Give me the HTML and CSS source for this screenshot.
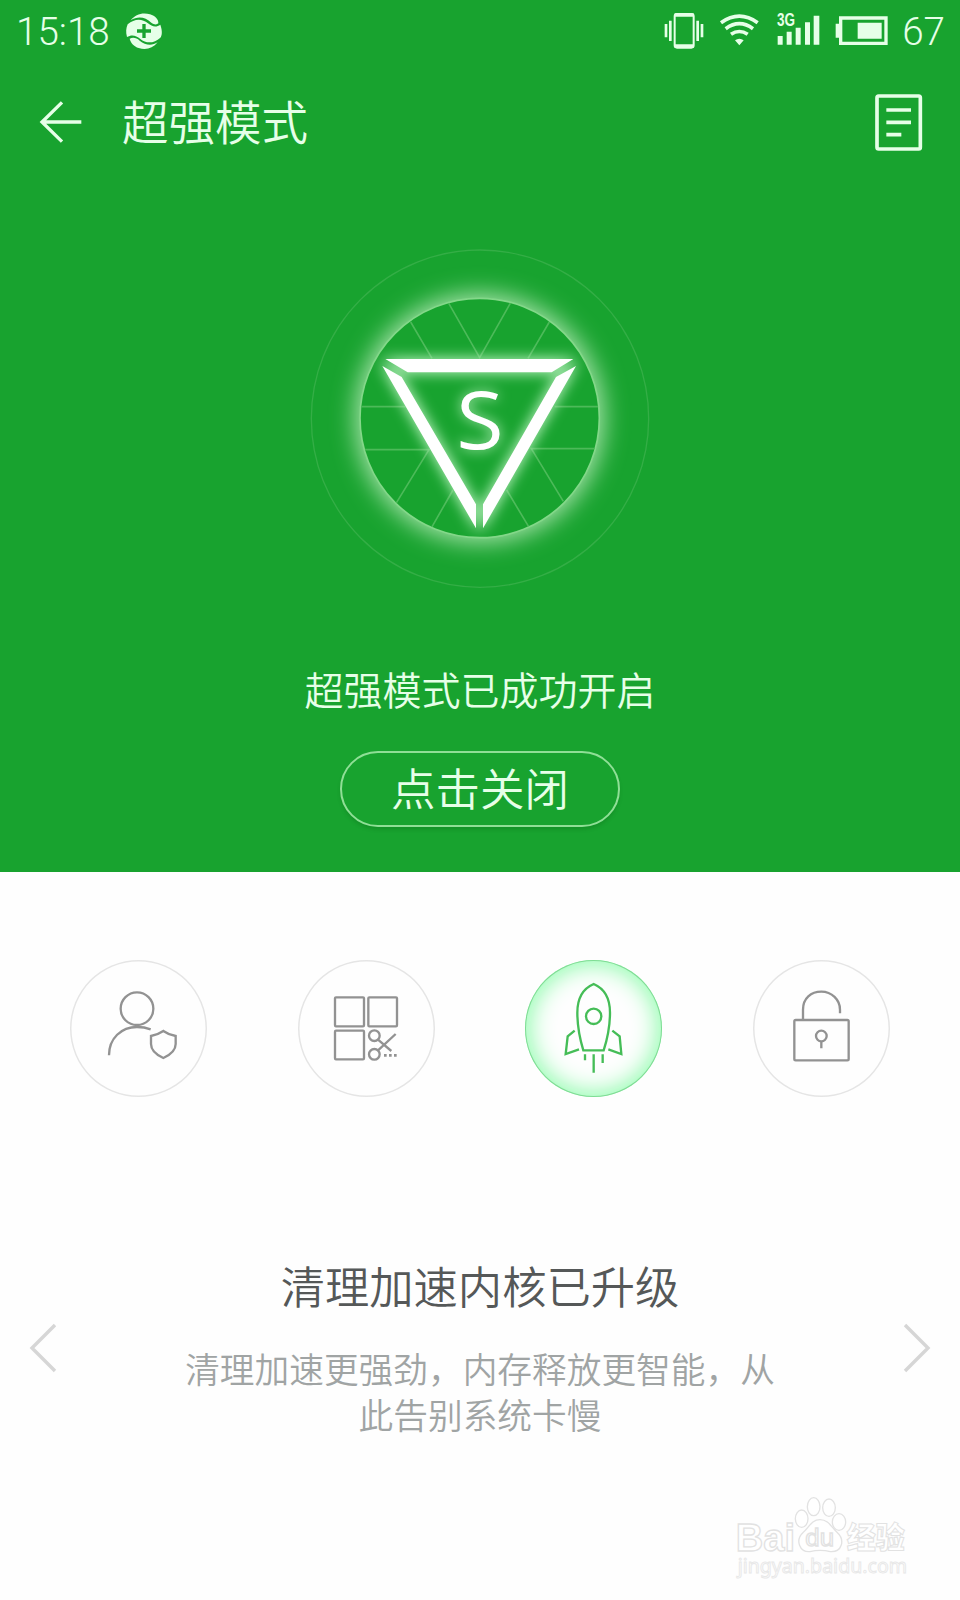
FILE: index.html
```html
<!DOCTYPE html>
<html lang="zh-CN">
<head>
<meta charset="utf-8">
<title>超强模式</title>
<link rel="stylesheet" href="styles.css">
</head>
<body>
<section class="hero">
  <div class="status-bar">
    <span class="clock">15:18</span>
    <svg class="app-badge" width="36" height="36" viewBox="0 0 108 108">
      <path fill="#e6ffe8" d="M14 22C28 4 50-3 72 4C88 9 98 20 97 31C92 36 84 35 76 29C58 12 36 8 14 22Z"/>
      <path fill="#e6ffe8" d="M5 34C26 16 48 16 66 31C78 42 92 43 103 35C110 55 108 68 103 74C84 92 60 92 43 78C30 66 16 64 3 72C-1 58 0 46 5 34Z"/>
      <path fill="#e6ffe8" d="M11 77C22 72 32 75 41 83C58 97 78 99 95 88C80 106 60 112 38 105C24 100 14 90 11 77Z"/>
      <path stroke="#18a32f" stroke-width="10" d="M33 54H75M54 33V75"/>
    </svg>
    <span class="spacer"></span>
    <svg class="system-icons" width="225" height="36" viewBox="0 0 675 108">
      <g fill="none" stroke="#e6ffe8">
        <rect x="32" y="3" width="57" height="101" rx="7" stroke-width="6"/>
        <path stroke-width="11" d="M32 6H89M32 99H89"/>
        <path stroke-width="8" d="M6 33V73M19 23V84M101 23V84M114 33V73"/>
        <path stroke-width="11" d="M171 29Q226-10 281 29M185 47Q226 17 267 47M201 64Q226 47 251 64"/>
      </g>
      <path fill="#e6ffe8" d="M213 82Q226 72 239 82L226 97ZM341 69h15v26h-15zM368 56h15v39h-15zM395 44h15v51h-15zM423 28h15v67h-15zM449 8h17v87h-17z"/>
      <text class="network" x="339" y="40" textLength="54" lengthAdjust="spacingAndGlyphs">3G</text>
      <path fill="none" stroke="#e6ffe8" stroke-width="10" d="M530 15H666V91H530Z"/>
      <path fill="#e6ffe8" d="M515 32H529V74H515zM581 29H653V77H581z"/>
    </svg>
    <span class="battery">67</span>
  </div>
  <header class="title-bar">
    <svg class="back" width="44" height="42" viewBox="0 0 132 126" fill="none" stroke="#e6ffe8" stroke-width="10"><path d="M69 4L9 63L69 122M9 63H127"/></svg>
    <h1 class="title">超强模式</h1>
    <svg class="log" width="48" height="58" viewBox="0 0 144 174" fill="none" stroke="#e6ffe8">
      <rect x="6" y="9" width="130" height="159" rx="5" stroke-width="11"/>
      <path stroke-width="11" d="M34 51H108M34 88H108M34 125H79"/>
    </svg>
  </header>
  <svg class="emblem" width="360" height="360" viewBox="0 0 1080 1080">
    <defs>
      <filter id="halo" x="-30%" y="-30%" width="160%" height="160%"><feGaussianBlur stdDeviation="35"/></filter>
      <filter id="glow" x="-20%" y="-20%" width="140%" height="140%"><feGaussianBlur stdDeviation="19"/></filter>
      <clipPath id="disc"><circle cx="539" cy="534" r="357"/></clipPath>
    </defs>
    <circle cx="540" cy="536" r="506" fill="none" stroke="#34ae46" stroke-width="4"/>
    <circle cx="539" cy="534" r="374" fill="#a5e2a9" filter="url(#halo)"/>
    <circle cx="539" cy="534" r="359" fill="#18a32f" stroke="#83d889" stroke-width="5"/>
    <g clip-path="url(#disc)">
      <path fill="none" stroke="#4cba59" stroke-width="5" d="M445 188L539 353L632 188M332 246L396 355M748 246L684 355M180 500H316M764 500H900M190 629H387L288 790M890 626H694L790 784M459 750L395 862M620 750L686 860"/>
      <g fill="#b4f0b9" filter="url(#glow)">
        <path stroke="#b4f0b9" stroke-width="8" d="M256 357H820L755 397H323ZM247 378L305 411L528 793V865ZM828 378L768 411L549 793V865Z"/>
        <text class="emblem-letter" x="540" y="627" textLength="142" lengthAdjust="spacingAndGlyphs">S</text>
      </g>
    </g>
    <path fill="#fff" d="M256 357H820L755 397H323ZM247 378L305 411L528 793V865ZM828 378L768 411L549 793V865Z"/>
    <text class="emblem-letter" x="540" y="627" fill="#fff" textLength="142" lengthAdjust="spacingAndGlyphs">S</text>
  </svg>
  <p class="state">超强模式已成功开启</p>
  <button class="toggle">点击关闭</button>
</section>

<nav class="features">
  <div class="feature">
    <svg width="136" height="136" viewBox="0 0 408 408" fill="none" stroke="#929292" stroke-width="7">
      <circle cx="201" cy="146" r="49"/>
      <path d="M117 286C117 235 154 201 201 201Q223 201 242 208M280 213Q262 225 243 228V252C243 270 258 284 280 294C302 284 317 270 317 252V228Q297 225 280 213Z"/>
    </svg>
  </div>
  <div class="feature">
    <svg width="136" height="136" viewBox="0 0 408 408" fill="none" stroke="#929292" stroke-width="7">
      <rect x="111" y="112" width="87" height="87" rx="3"/><rect x="211" y="112" width="86" height="87" rx="3"/><rect x="111" y="212" width="87" height="86" rx="3"/>
      <circle cx="229" cy="227" r="16"/><circle cx="229" cy="283" r="16"/>
      <path d="M240 239L280 273M240 271L293 222"/>
      <path stroke-width="8" d="M258 286h8m7 0h8m7 0h8"/>
    </svg>
  </div>
  <div class="feature active">
    <svg width="136" height="136" viewBox="0 0 408 408" fill="none" stroke="#45bd57" stroke-width="7">
      <path d="M206 72Q157 93 157 158Q157 212 175 271H236Q255 212 255 158Q255 93 206 72Z"/>
      <circle cx="206" cy="169" r="23"/>
      <path d="M149 212L128 229L122 282L162 268M262 212L284 229L289 282L250 268M206 283V338M180 283V301M233 283V309"/>
    </svg>
  </div>
  <div class="feature">
    <svg width="136" height="136" viewBox="0 0 408 408" fill="none" stroke="#929292" stroke-width="7">
      <rect x="124" y="180" width="163" height="121" rx="4"/>
      <path d="M150 180V149C150 115 174 95 205 95S261 119 261 149V160M205 243V265"/><circle cx="205" cy="228" r="16"/>
    </svg>
  </div>
</nav>

<main class="carousel">
  <svg class="chevron" width="26" height="48" viewBox="0 0 26 48"><path d="M25 1L2 24L25 47"/></svg>
  <div class="slide">
    <h2 class="slide-title">清理加速内核已升级</h2>
    <p class="slide-text">清理加速更强劲，内存释放更智能，从<br>此告别系统卡慢</p>
  </div>
  <svg class="chevron" width="26" height="48" viewBox="0 0 26 48"><path d="M1 1L24 24L1 47"/></svg>
</main>

<footer class="brand">
  <svg width="210" height="110" viewBox="0 0 630 330" fill="#fff" stroke="#e2e2e2" stroke-width="4">
    <text class="brand-name" x="47" y="212" textLength="178" lengthAdjust="spacingAndGlyphs">Bai</text>
    <ellipse cx="245" cy="116" rx="19" ry="26"/><ellipse cx="281" cy="80" rx="19" ry="27"/><ellipse cx="327" cy="83" rx="19" ry="26"/><ellipse cx="357" cy="126" rx="20" ry="25"/>
    <path d="M300 119C274 119 267 143 250 157C224 181 239 217 270 215Q300 207 331 215C365 217 377 181 351 157C334 142 326 119 300 119Z"/>
    <text class="brand-du" x="256" y="198" textLength="86" lengthAdjust="spacingAndGlyphs">du</text>
    <text class="brand-cjk" x="380" y="203" textLength="174" lengthAdjust="spacingAndGlyphs">经验</text>
    <text class="brand-url" x="53" y="280" textLength="508" lengthAdjust="spacingAndGlyphs">jingyan.baidu.com</text>
  </svg>
</footer>
</body>
</html>
```
FILE: styles.css
```css
* { box-sizing: border-box; }

body {
  margin: 0;
  width: 960px;
  height: 1600px;
  display: flex;
  flex-direction: column;
  background: #fefefe;
  font-family: "Noto Sans CJK SC", sans-serif;
  font-weight: 350;
  overflow: hidden;
}

h1, h2, p { margin: 0; font-weight: inherit; }
svg { display: block; flex: none; overflow: visible; }

.hero {
  height: 872px;
  display: flex;
  flex-direction: column;
  align-items: center;
  background: #18a32f;
  color: #e6ffe8;
}

.status-bar {
  width: 100%;
  height: 62px;
  padding: 0 15px 0 16px;
  display: flex;
  align-items: center;
  font-family: Roboto, sans-serif;
  font-weight: 300;
  font-size: 38.6px;
  line-height: 58px;
}
.clock, .battery { padding-top: 1px; }
.app-badge { margin-left: 16px; }
.spacer { flex: 1; }
.battery { margin-left: 13px; }
.network { font: 700 54px "Liberation Sans", sans-serif; fill: #e6ffe8; }

.title-bar {
  width: 100%;
  height: 120px;
  padding: 0 37px 0 39px;
  display: flex;
  align-items: center;
}
.title { flex: 1; margin-left: 39px; font-size: 46.5px; line-height: 60px; padding-bottom: 4px; }

.emblem { margin-top: 58px; }
.emblem-letter { font: 500 240px "Open Sans", sans-serif; text-anchor: middle; }

.state { margin-top: 60px; font-size: 39px; line-height: 56px; }

.toggle {
  width: 280px;
  height: 76px;
  margin-top: 35px;
  padding: 0 0 4px;
  border: 2px solid #8fdf96;
  border-radius: 39px;
  background: transparent;
  box-shadow: 0 3px 4px -1px rgba(0, 70, 10, .22);
  color: inherit;
  font: inherit;
  font-size: 44.5px;
  line-height: 66px;
}

.features {
  height: 313px;
  padding: 88px 70px 0;
  display: flex;
  justify-content: space-between;
}
.feature {
  width: 137px;
  height: 137px;
  border-radius: 50%;
  box-shadow: inset 0 0 0 1.5px #e5e5e5;
}
.feature.active { box-shadow: inset 0 0 0 1px #7fdc94, inset 0 0 24px 4px #8dfbab; }

.carousel {
  height: 325px;
  padding: 0 30px;
  display: flex;
  align-items: center;
  justify-content: space-between;
}
.chevron { fill: none; stroke: #d6d6d6; stroke-width: 3.4; }
.slide { padding-bottom: 5px; text-align: center; }
.slide-title { color: #555858; font-size: 44.3px; line-height: 64px; }
.slide-text { margin-top: 28px; color: #a0a4a4; font-size: 34.7px; line-height: 46.5px; }

.brand { flex: 1; display: flex; justify-content: flex-end; padding-right: 30px; margin-top: -30px; }
.brand-name { font: 700 119px "Liberation Sans", sans-serif; }
.brand-du { font: 400 74px "Liberation Sans", sans-serif; }
.brand-cjk { font: 900 88px "Noto Sans CJK SC", sans-serif; stroke-width: 3; }
.brand-url { font: 400 62px "Noto Sans", sans-serif; stroke-width: 3; stroke: #e8e8e8; }
```
